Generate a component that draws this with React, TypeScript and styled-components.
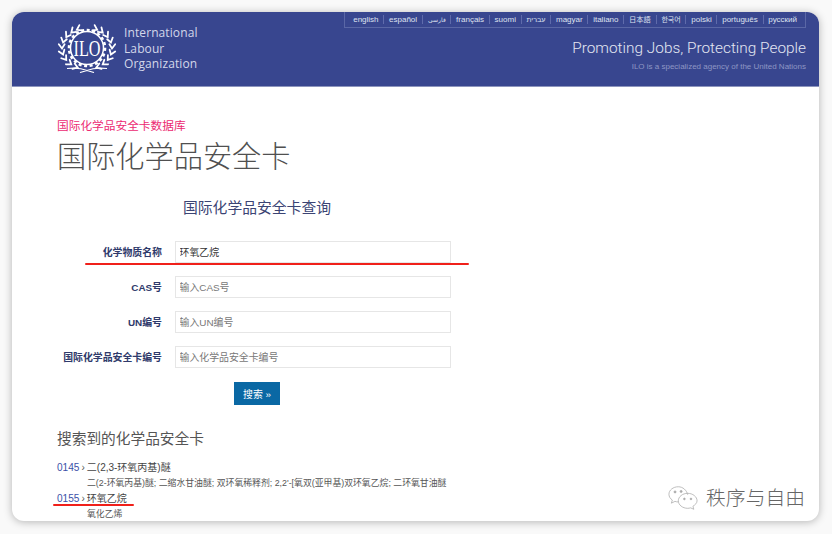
import React from 'react';
import styled, { createGlobalStyle } from 'styled-components';

const CJK = `"Liberation Sans", "Noto Sans CJK SC", sans-serif`;

const GlobalStyle = createGlobalStyle`
  html, body {
    margin: 0;
    padding: 0;
    height: 534px;
    overflow: hidden;
    background: #f9f9f9;
    font-family: ${CJK};
  }
`;

const Card = styled.div`
  position: relative;
  margin: 12px 13px 0 12px;
  height: 509px;
  background: #fff;
  border-radius: 12px;
  overflow: hidden;
  box-shadow: 0 1px 9px rgba(0, 0, 0, 0.28);
`;

const Header = styled.header`
  height: 75px;
  box-sizing: border-box;
  background: #38468f;
  border-bottom: 1px solid #8d95bd;
  padding: 0 13px 0 45px;
  display: flex;
  justify-content: space-between;
`;

const Brand = styled.div`
  display: flex;
  align-items: flex-start;
  gap: 7px;
  padding-top: 11px;
`;

const BrandName = styled.div`
  font-family: "Open Sans", "Liberation Sans", sans-serif;
  font-size: 12px;
  line-height: 15.5px;
  letter-spacing: 0.1px;
  color: #d4d8ea;
  margin-top: 2px;
`;

const HeaderRight = styled.div`
  display: flex;
  flex-direction: column;
  align-items: flex-end;
`;

const LangBar = styled.nav`
  height: 16px;
  box-sizing: border-box;
  display: flex;
  align-items: center;
  padding: 0 8px;
  border: 1px solid #5a67a6;
  border-top: none;
`;

const Lang = styled.span<{ $size: number }>`
  font-size: ${p => p.$size}px;
  line-height: 13px;
  color: #dfe2f0;
  padding: 0 4.75px;
  border-left: 1px solid #5f6bab;
  height: 9px;
  display: flex;
  align-items: center;
  white-space: nowrap;
  &:first-child {
    border-left: none;
    padding-left: 0;
  }
  &:last-child {
    padding-right: 0;
  }
`;

const Tagline = styled.div`
  font-family: Roboto, "Liberation Sans", sans-serif;
  font-weight: 300;
  font-size: 15.4px;
  line-height: 18px;
  color: #e4e6f2;
  margin-top: 11px;
  white-space: nowrap;
`;

const Agency = styled.div`
  font-size: 8px;
  line-height: 10px;
  color: #8e96c4;
  margin-top: 5px;
  white-space: nowrap;
`;

const Main = styled.main`
  padding: 31px 0 0 45px;
`;

const Kicker = styled.div`
  font-size: 11.7px;
  line-height: 16px;
  color: #ec2a72;
`;

const Title = styled.h1`
  margin: 2px 0 0;
  font-size: 29.2px;
  line-height: 42px;
  font-weight: 300;
  color: #505050;
`;

const FormTitle = styled.h3`
  margin: 18px 0 0 126px;
  font-size: 14.8px;
  line-height: 24px;
  font-weight: 400;
  color: #3b4474;
`;

const Form = styled.form`
  margin-top: 21px;
  display: flex;
  flex-direction: column;
  gap: 13px;
`;

const Row = styled.div`
  display: grid;
  grid-template-columns: 105px 276px;
  column-gap: 13px;
  align-items: center;
`;

const Label = styled.label`
  font-size: 9.9px;
  font-weight: 700;
  text-align: right;
  color: #2f3a6b;
  white-space: nowrap;
  justify-self: end;
`;

const Input = styled.input`
  width: 276px;
  height: 22px;
  box-sizing: border-box;
  margin: 0;
  padding: 0 3.5px;
  border: 1px solid #e6e6e6;
  border-radius: 0;
  outline: none;
  font-family: ${CJK};
  font-size: 9.9px;
  color: #333;
  background: #fff;
  &::placeholder {
    color: #777;
    opacity: 1;
  }
`;

const SearchButton = styled.button`
  display: block;
  margin: 14px 0 0 177px;
  width: 46px;
  height: 23px;
  padding: 0;
  border: none;
  background: #0a68a4;
  color: #fff;
  font-family: ${CJK};
  font-size: 9.9px;
`;

const ResultsTitle = styled.h2`
  margin: 24px 0 0;
  font-size: 14.7px;
  line-height: 20px;
  font-weight: 400;
  color: #555;
`;

const Results = styled.div`
  margin-top: 11px;
`;

const ResultHead = styled.div`
  font-size: 10px;
  line-height: 15px;
  color: #444;
  white-space: nowrap;
`;

const CardNumber = styled.a`
  color: #3b50a8;
  font-size: 10.1px;
`;

const Chevron = styled.span`
  color: #555;
  margin: 0 2px;
`;

const Synonyms = styled.div`
  margin: 1px 0 0 30px;
  font-size: 8.85px;
  line-height: 15px;
  color: #555;
  white-space: nowrap;
`;

const Marker = styled.div<{ $left: number; $top: number; $width: number }>`
  position: absolute;
  left: ${p => p.$left}px;
  top: ${p => p.$top}px;
  width: ${p => p.$width}px;
  height: 2px;
  background: #f0201a;
  border-radius: 1px;
`;

const Watermark = styled.div`
  position: absolute;
  right: 14px;
  bottom: 10px;
  display: flex;
  align-items: center;
  gap: 8px;
`;

const WatermarkText = styled.span`
  font-size: 19.8px;
  line-height: 24px;
  font-weight: 300;
  color: #666;
`;

const langs: [string, number][] = [
  ['english', 8], ['español', 8], ['فارسی', 6.4], ['français', 8], ['suomi', 8], ['עברית', 7.2], ['magyar', 8],
  ['italiano', 8], ['日本語', 7.3], ['한국어', 7], ['polski', 8], ['português', 8], ['русский', 8],
];

const leafAngles = [112, 129, 146, 163, 180, 197, 214, 231, 246];

// one side of the laurel, mirrored for the other side
const Wreath = ({ flip }: { flip?: boolean }) => (
  <g transform={flip ? 'translate(60 0) scale(-1 1)' : undefined} stroke="#fff" strokeWidth="1.8" strokeLinecap="round" fill="none">
    {leafAngles.map(deg => {
      const a = deg * Math.PI / 180;
      const x = 30 + 25 * Math.cos(a);
      const y = 25.5 + 20.5 * Math.sin(a);
      const tx = -Math.sin(a);
      const ty = Math.cos(a);
      const nx = Math.cos(a);
      const ny = Math.sin(a);
      return (
        <path
          key={deg}
          d={`M${x + 4.2 * tx + 3.2 * nx} ${y + 4.2 * ty + 3.2 * ny}L${x} ${y}L${x + 4.2 * tx - 2.6 * nx} ${y + 4.2 * ty - 2.6 * ny}`}
        />
      );
    })}
  </g>
);

const IloLogo = () => (
  <svg width="60" height="50" viewBox="0 0 60 50">
    <Wreath />
    <Wreath flip />
    <circle cx="30" cy="25" r="16.5" fill="none" stroke="#fff" strokeWidth="1.5" />
    <circle cx="30" cy="25" r="18" fill="none" stroke="#fff" strokeWidth="2.6" strokeDasharray="3 2.6" />
    <circle cx="30" cy="25" r="14.6" fill="#38468f" />
    <text x="30" y="33" textAnchor="middle" fontFamily="'Liberation Serif', serif" fontSize="24" fill="#fff" textLength="27" lengthAdjust="spacingAndGlyphs">ILO</text>
    <path d="M10 45.500Q22 44 30 47.500Q38 44 50 45.500M23 49.500L30 47.500L37 49.500" fill="none" stroke="#fff" strokeWidth="1.2" />
  </svg>
);

const WeChatIcon = () => (
  <svg width="30" height="26" viewBox="0 0 32 26" fill="none" stroke="#aaa" strokeWidth="0.8">
    <path d="M11 1C5.5 1 1 4.6 1 9c0 2.6 1.4 4.7 3.6 6.2L3.600 18.500 7.400 16.600c1.200.4 2.400.6 3.600.6" />
    <path d="M21 9.500C20 4.700 15.800 1 11 1" />
    <path d="M21 8c-5.500 0-10 3.700-10 8s4.500 8 10 8c1.100 0 2.100-.2 3.100-.5L27.500 25l-.9-3.200C29 20.300 31 18.300 31 16c0-4.300-4.500-8-10-8z" />
    <circle cx="7.500" cy="6.500" r="1.100" fill="#aaa" />
    <circle cx="14" cy="6" r="1.100" fill="#aaa" />
    <circle cx="17.500" cy="14" r="0.900" fill="#aaa" />
    <circle cx="24.500" cy="14" r="0.900" fill="#aaa" />
  </svg>
);

const App = () => (
  <>
    <GlobalStyle />
    <Card>
      <Header>
        <Brand>
          <IloLogo />
          <BrandName>
            International<br />Labour<br />Organization
          </BrandName>
        </Brand>
        <HeaderRight>
          <LangBar>
            {langs.map(([l, size]) => <Lang key={l} $size={size}>{l}</Lang>)}
          </LangBar>
          <Tagline>Promoting Jobs, Protecting People</Tagline>
          <Agency>ILO is a specialized agency of the United Nations</Agency>
        </HeaderRight>
      </Header>
      <Main>
        <Kicker>国际化学品安全卡数据库</Kicker>
        <Title>国际化学品安全卡</Title>
        <FormTitle>国际化学品安全卡查询</FormTitle>
        <Form>
          <Row>
            <Label>化学物质名称</Label>
            <Input defaultValue="环氧乙烷" />
          </Row>
          <Row>
            <Label>CAS号</Label>
            <Input placeholder="输入CAS号" />
          </Row>
          <Row>
            <Label>UN编号</Label>
            <Input placeholder="输入UN编号" />
          </Row>
          <Row>
            <Label>国际化学品安全卡编号</Label>
            <Input placeholder="输入化学品安全卡编号" />
          </Row>
        </Form>
        <SearchButton type="button">搜索 »</SearchButton>
        <ResultsTitle>搜索到的化学品安全卡</ResultsTitle>
        <Results>
          <ResultHead><CardNumber>0145</CardNumber><Chevron>›</Chevron>二(2,3-环氧丙基)醚</ResultHead>
          <Synonyms>二(2-环氧丙基)醚; 二缩水甘油醚; 双环氧稀释剂; 2,2'-[氧双(亚甲基)双环氧乙烷; 二环氧甘油醚</Synonyms>
          <ResultHead><CardNumber>0155</CardNumber><Chevron>›</Chevron>环氧乙烷</ResultHead>
          <Synonyms>氧化乙烯</Synonyms>
        </Results>
      </Main>
      <Marker $left={73} $top={251} $width={384} />
      <Marker $left={41} $top={492} $width={81} />
      <Watermark>
        <WeChatIcon />
        <WatermarkText>秩序与自由</WatermarkText>
      </Watermark>
    </Card>
  </>
);

export default App;
